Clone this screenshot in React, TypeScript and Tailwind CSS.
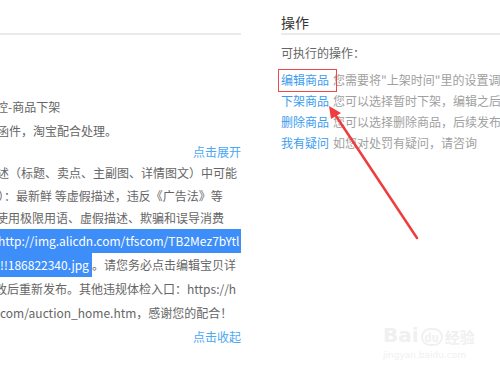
import React from "react";

const font = { fontFamily: '"Noto Sans CJK SC", "Noto Sans", sans-serif' };

export default function App() {
  return (
    <div
      className="relative w-[500px] h-[374px] bg-white overflow-hidden flex text-[12px]"
      style={font}
    >
      {/* Left panel */}
      <div className="w-[241px] shrink-0 flex flex-col overflow-hidden text-[#666]">
        <div className="h-[33px]" />
        <div className="h-[2px] bg-[#ebebeb]" />
        <div className="h-[60px]" />
        <div className="h-[24px] leading-[24px] whitespace-nowrap ml-[-4px]">控-商品下架</div>
        <div className="h-[24px] leading-[24px] whitespace-nowrap ml-[-3px]">函件，淘宝配合处理。</div>
        <div className="h-[18px] leading-[18px] text-right text-[#4aa8f5]">点击展开</div>
        <div className="h-[24px] leading-[24px] whitespace-nowrap ml-[-3px]">述（标题、卖点、主副图、详情图文）中可能</div>
        <div className="h-[22px] leading-[22px] whitespace-nowrap ml-[-2px]">）：最新鲜 等虚假描述，违反《广告法》等</div>
        <div className="h-[22px] leading-[22px] whitespace-nowrap ml-[-4px]">使用极限用语、虚假描述、欺骗和误导消费</div>
        <div className="h-[24px] leading-[24px] whitespace-nowrap bg-[#3d8ef8] text-white overflow-hidden">
          <span className="ml-[-2px]">http://img.alicdn.com/tfscom/TB2Mez7bYtl</span>
        </div>
        <div className="h-[24px] leading-[24px] whitespace-nowrap flex">
          <span className="h-[24px] bg-[#3d8ef8] text-white pr-[3px]">!!186822340.jpg</span>
          <span>。请您务必点击编辑宝贝详</span>
        </div>
        <div className="h-[24px] leading-[24px] whitespace-nowrap ml-[-5px]">改后重新发布。其他违规体检入口：https://h</div>
        <div className="h-[24px] leading-[24px] whitespace-nowrap">com/auction_home.htm，感谢您的配合！</div>
        <div className="h-[24px] leading-[24px] text-right text-[#4aa8f5]">点击收起</div>
      </div>

      <div className="w-[40px] shrink-0" />

      {/* Right panel */}
      <div className="flex-1 flex flex-col overflow-hidden">
        <div className="h-[33px] pt-[12px] leading-[20px] text-[14px] text-[#333]">操作</div>
        <div className="h-[2px] bg-[#ebebeb]" />
        <div className="mt-[8px] h-[20px] leading-[20px] text-[#666]">可执行的操作：</div>
        <div className="mt-[6px] flex flex-col whitespace-nowrap">
          <div className="h-[21px] leading-[21px]">
            <span className="text-[#3b9cf0]">编辑商品</span>
            <span className="text-[#a0a0a0] ml-[4px]">您需要将"上架时间"里的设置调整</span>
          </div>
          <div className="h-[21px] leading-[21px]">
            <span className="text-[#3b9cf0]">下架商品</span>
            <span className="text-[#a0a0a0] ml-[4px]">您可以选择暂时下架，编辑之后</span>
          </div>
          <div className="h-[21px] leading-[21px]">
            <span className="text-[#3b9cf0]">删除商品</span>
            <span className="text-[#a0a0a0] ml-[4px]">您可以选择删除商品，后续发布</span>
          </div>
          <div className="h-[21px] leading-[21px]">
            <span className="text-[#3b9cf0]">我有疑问</span>
            <span className="text-[#a0a0a0] ml-[4px]">如您对处罚有疑问，请咨询</span>
          </div>
        </div>
      </div>

      {/* Red annotation box */}
      <div className="absolute left-[278px] top-[69px] w-[59px] h-[23px] border border-[#f04848]" />

      {/* Red arrow */}
      <svg className="absolute left-0 top-0" width="500" height="374" viewBox="0 0 500 374">
        <line x1="417" y1="238" x2="334" y2="113" stroke="#f03c3c" strokeWidth="2.5" strokeLinecap="round" />
        <polygon points="329,106 341,113 331,119" fill="#f03c3c" />
      </svg>

      {/* Watermark */}
      <div className="absolute left-[383px] top-[322px] flex flex-col items-start text-[#f0f0f0]">
        <div className="flex items-end h-[24px]">
          <span className="text-[20px] leading-[22px] font-bold" style={{ fontFamily: '"DejaVu Sans", sans-serif' }}>Bai</span>
          <span className="mx-[2px] text-[11px] leading-[14px] font-bold border-2 border-[#f0f0f0] rounded-full px-[2px]">du</span>
          <span className="text-[15px] leading-[18px] font-bold">经验</span>
        </div>
        <span className="text-[9px] leading-[12px] mt-[3px]" style={{ fontFamily: '"DejaVu Sans", sans-serif' }}>jingyan.baidu.com</span>
      </div>
    </div>
  );
}
